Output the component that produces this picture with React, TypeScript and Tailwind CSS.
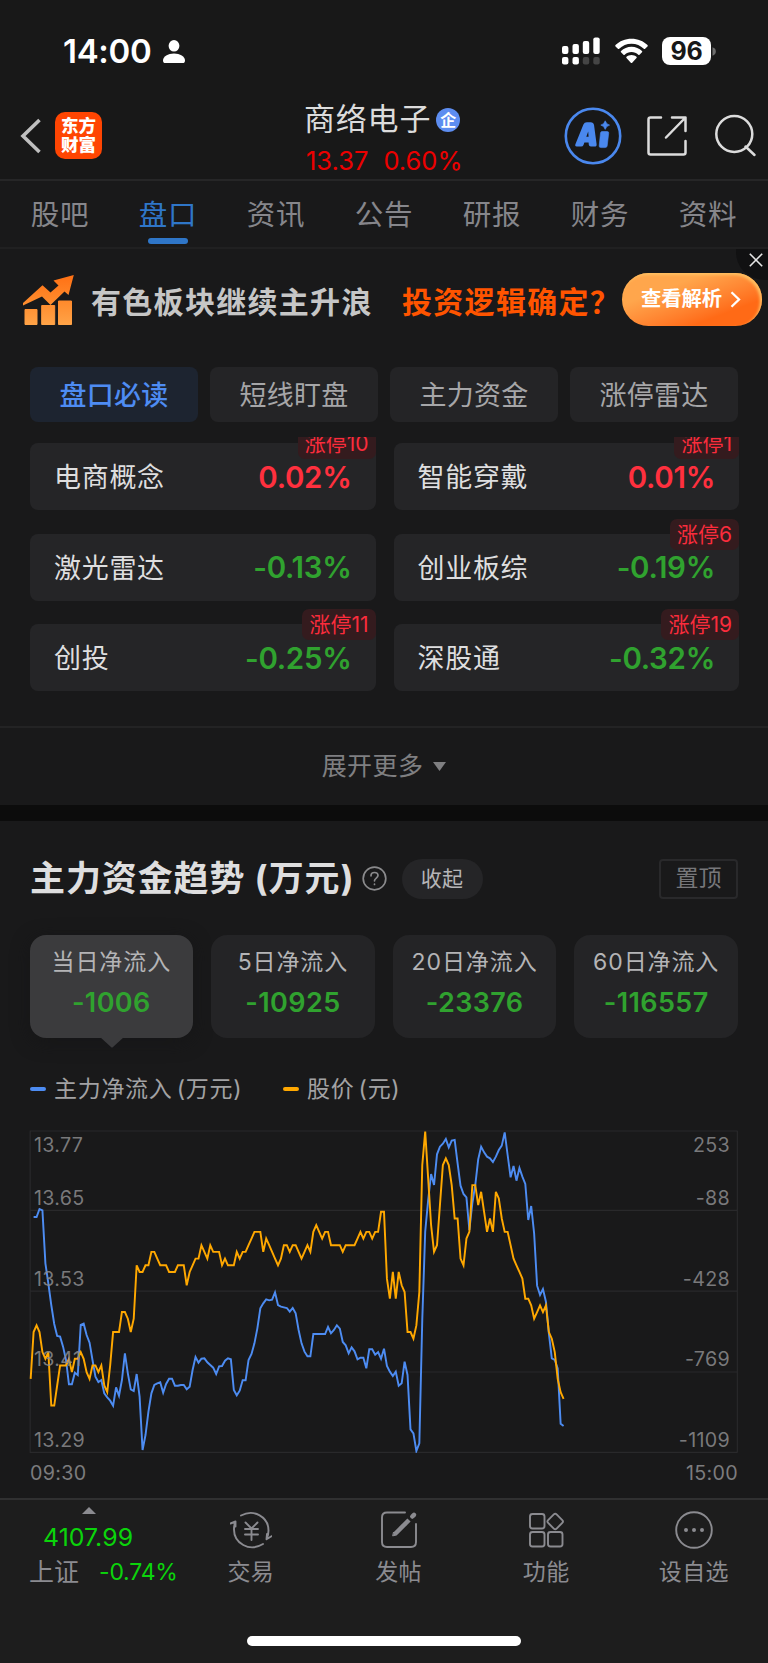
import React from 'react';
import clsx from 'clsx';

interface Sector {
  name: string;
  change: string;
  limitUp?: number;
}

interface FlowCard {
  label: string;
  value: string;
}

const tabs = ['股吧', '盘口', '资讯', '公告', '研报', '财务', '资料'];

const chips = ['盘口必读', '短线盯盘', '主力资金', '涨停雷达'];

const sectors: Sector[] = [
  { name: '电商概念', change: '0.02%', limitUp: 10 },
  { name: '智能穿戴', change: '0.01%', limitUp: 1 },
  { name: '激光雷达', change: '-0.13%' },
  { name: '创业板综', change: '-0.19%', limitUp: 6 },
  { name: '创投', change: '-0.25%', limitUp: 11 },
  { name: '深股通', change: '-0.32%', limitUp: 19 }
];

const flowCards: FlowCard[] = [
  { label: '当日净流入', value: '-1006' },
  { label: '5日净流入', value: '-10925' },
  { label: '20日净流入', value: '-23376' },
  { label: '60日净流入', value: '-116557' }
];

const priceTicks = ['13.77', '13.65', '13.53', '13.41', '13.29'];
const flowTicks = ['253', '-88', '-428', '-769', '-1109'];

// Minute prices, in cents below the day high of 13.77
const priceSeries = [
  37, 30, 29, 30, 33, 34, 33, 41, 41, 38, 35, 35, 35, 34, 36, 34, 34, 33, 34, 36,
  37, 35, 35, 36, 35, 38, 39, 35, 30, 30, 30, 27, 27, 28, 30, 28, 20, 21, 21, 20,
  20, 18, 18, 19, 20, 20, 20, 21, 21, 21, 20, 20, 20, 23, 21, 20, 19, 19, 17, 18,
  19, 17, 18, 18, 18, 20, 19, 20, 20, 20, 18, 19, 18, 18, 17, 16, 15, 15, 15, 18,
  16, 17, 18, 19, 20, 19, 17, 17, 18, 17, 17, 18, 19, 18, 17, 18, 15, 14, 15, 16,
  15, 15, 17, 17, 17, 17, 18, 17, 17, 17, 17, 16, 15, 16, 15, 15, 16, 15, 15, 12,
  12, 22, 25, 21, 25, 21, 23, 24, 30, 30, 31, 29, 24, 5, 0, 7, 14, 18, 17, 11,
  5, 4, 5, 8, 13, 13, 19, 20, 16, 15, 8, 8, 11, 9, 12, 15, 13, 15, 9, 10,
  13, 15, 15, 17, 19, 20, 21, 22, 25, 25, 26, 28, 27, 26, 27, 26, 30, 31, 33, 37,
  39, 40
];

// Minute net inflow, already scaled to the chart height, first value at 09:31
const flowSeries = [
  291, 291, 267, 271, 430, 490, 555, 612, 648, 650, 680, 720, 793, 793, 758, 765, 615, 611, 645, 668,
  720, 770, 786, 780, 820, 832, 842, 857, 802, 827, 780, 700, 760, 808, 813, 762, 830, 990, 945, 875,
  820, 795, 790, 787, 818, 792, 776, 776, 797, 797, 795, 795, 808, 800, 750, 711, 728, 716, 715, 727,
  735, 743, 762, 739, 738, 722, 715, 718, 810, 826, 812, 781, 781, 720, 702, 670, 625, 565, 550, 538,
  541, 539, 517, 555, 560, 562, 564, 575, 564, 580, 630, 670, 695, 709, 709, 642, 642, 642, 642, 642,
  621, 640, 630, 616, 626, 666, 676, 700, 682, 694, 718, 713, 713, 745, 688, 688, 704, 696, 716, 686,
  738, 755, 768, 755, 797, 790, 725, 765, 928, 940, 993, 970, 600, 335, 240, 162, 195, 103, 80, 71,
  57, 82, 62, 60, 130, 197, 222, 232, 330, 250, 195, 118, 80, 97, 110, 115, 126, 110, 90, 77,
  37, 105, 172, 138, 182, 144, 170, 192, 300, 258, 340, 497, 525, 507, 545, 640, 715, 720, 745, 911,
  918
];

const minuteX = (i: number) => (32 + i * 8.833).toFixed(1);
const pricePoints = priceSeries.map((v, i) => `${minuteX(i)},${(35 + v * 20.04).toFixed(1)}`).join(' ');
const flowPoints = flowSeries.map((v, i) => `${minuteX(i + 1)},${v}`).join(' ');

function StatusBar() {
  return (
    <div className="flex h-[90px] pt-[34px] pl-[63px] text-white">
      <span className="w-[100px] text-[33px] font-semibold leading-[35px] tracking-[-0.3px]">14:00</span>
      <svg className="mt-[6px] h-[24px] w-[22px]" viewBox="0 0 22 24" fill="currentColor">
        <ellipse cx="11" cy="5.8" rx="5.4" ry="5.8" />
        <path d="M0 20.5C0 16.5 5 13.6 11 13.6s11 2.9 11 6.9c0 1.7-.8 2.6-2.4 2.6H2.4C.8 23.1 0 22.2 0 20.5z" />
      </svg>
      <svg className="ml-[377px] mt-[3px] h-[28px] w-[38px]" viewBox="0 0 38 28" fill="currentColor">
        <rect x="0" y="9" width="6.4" height="8" rx="2" />
        <rect x="10.5" y="7" width="6.4" height="10" rx="2" />
        <rect x="20.8" y="4" width="6.4" height="13" rx="2" />
        <rect x="31.3" y="0.5" width="6.4" height="16.5" rx="2" />
        <rect x="0" y="20" width="6.4" height="7.5" rx="2" />
        <rect x="10.5" y="20" width="6.4" height="7.5" rx="2" />
        <rect x="20.8" y="20" width="6.4" height="7.5" rx="2" fill="#454545" />
        <rect x="31.3" y="20" width="6.4" height="7.5" rx="2" fill="#454545" />
      </svg>
      <svg className="ml-[15px] mt-[4px] h-[26px] w-[33px]" viewBox="0 0 33 26" fill="currentColor">
        <path d="M16.5 .8C10.2 .8 4.5 3.2 .5 7.1c-.4.4-.4.9 0 1.3l2.4 2.4c.4.4.9.4 1.3 0 3.2-3.1 7.5-5 12.3-5s9.1 1.9 12.3 5c.4.4.9.4 1.3 0l2.4-2.4c.4-.4.4-.9 0-1.3C28.5 3.2 22.8.8 16.5.8z" />
        <path d="M16.5 8.8c-4.1 0-7.8 1.6-10.5 4.2-.4.4-.4.9 0 1.3l2.5 2.4c.3.4.9.4 1.2 0 1.8-1.7 4.2-2.7 6.8-2.7s5 1 6.8 2.7c.3.4.9.4 1.2 0l2.5-2.4c.4-.4.4-.9 0-1.3-2.7-2.6-6.4-4.2-10.5-4.2z" />
        <path d="M16.5 16.9c-2 0-3.7.7-5 1.9-.4.4-.4.9 0 1.2l4.3 4.7c.4.4 1 .4 1.4 0l4.3-4.7c.4-.3.4-.8 0-1.2-1.3-1.2-3-1.9-5-1.9z" />
      </svg>
      <div className="ml-[14px] mt-[3px] flex h-[28px] w-[49px] items-center justify-center rounded-[8px] bg-white text-[25px] font-bold leading-none tracking-[-0.3px] text-[#181818]">
        96
      </div>
      <svg className="mt-[13px] h-[9px] w-[5px]" viewBox="0 0 5 9">
        <path d="M1.5 0.3C3.8 1 4.8 2.5 4.8 4.5S3.8 8 1.5 8.7z" fill="#6d6d6d" />
      </svg>
    </div>
  );
}

function Header() {
  return (
    <header className="flex h-[91px] border-b-2 border-[#262627] text-[#dcdcdc]">
      <svg className="ml-[20px] mt-[28px] h-[36px] w-[21px]" viewBox="0 0 21 36" fill="none" stroke="#bfbfbf" strokeWidth="3.6">
        <path d="M19.5 2L3 18l16.5 16" />
      </svg>
      <div className="ml-[14px] mt-[22px] flex h-[47px] w-[47px] flex-col items-center justify-center rounded-[10px] bg-[#ff4502] text-[17.5px] font-black leading-[18.5px] text-white">
        <span>东方</span>
        <span>财富</span>
      </div>
      <div className="ml-[202px] mt-[12px] w-[175px]">
        <div className="flex h-[34px] items-center">
          <span className="text-[31px] leading-[34px] tracking-[0.8px]">商络电子</span>
          <span className="ml-[5px] mt-[2px] flex h-[24px] w-[24px] items-center justify-center rounded-full bg-[#5d8df0] text-[16px] font-bold leading-none text-white">
            企
          </span>
        </div>
        <div className="ml-[2px] mt-[9px] flex gap-[15px] text-[25.5px] leading-[32px] text-[#ec0000]">
          <span>13.37</span>
          <span>0.60%</span>
        </div>
      </div>
      <svg className="ml-[85px] mt-[17px] h-[58px] w-[58px] shrink-0" viewBox="0 0 58 58">
        <circle cx="29" cy="29" r="27.2" fill="none" stroke="#4a88ee" strokeWidth="2.6" />
        <path
          d="M11.3 37.6L19.4 17.6Q20.4 15.3 22.8 15.3H27Q29.6 15.3 30 17.8L32.6 37.2Q32.9 39.6 30.6 39.6H26.8Q25 39.6 24.8 37.8L24.6 35.6H20.4L19.5 38Q18.9 39.6 17.1 39.6H12.6Q10.6 39.6 11.3 37.6ZM22.3 29.8H24.6L24.2 24.6Z"
          fill="#4a88ee"
          fillRule="evenodd"
        />
        <path
          d="M38 24.5H43.2Q44.9 24.5 44.7 26.2L43.2 38.8Q43 40.6 41.2 40.6H36.8Q35 40.6 35.2 38.8L36.5 26Q36.7 24.5 38 24.5ZM41.2 13.8Q42.2 17.2 45.6 18.1Q42.2 19 41.2 22.4Q40.2 19 36.8 18.1Q40.2 17.2 41.2 13.8Z"
          fill="#4a88ee"
          stroke="#4a88ee"
          strokeWidth="0.6"
        />
      </svg>
      <svg className="ml-[24px] mt-[25px] h-[42px] w-[42px] shrink-0" viewBox="0 0 42 42" fill="none" stroke="currentColor" strokeWidth="2.5" strokeLinecap="round" strokeLinejoin="round">
        <path d="M15 2.5H4.5Q2.5 2.5 2.5 4.5V37.5Q2.5 39.5 4.5 39.5H37.5Q39.5 39.5 39.5 37.5V26" />
        <path d="M26 2.5H39.5V16M39.5 2.5L20 22.5" />
      </svg>
      <svg className="ml-[26px] mt-[24px] h-[43px] w-[43px] shrink-0" viewBox="0 0 43 43" fill="none" stroke="currentColor" strokeWidth="2.5" strokeLinecap="round">
        <circle cx="20.3" cy="20" r="18" />
        <path d="M31.5 32.5L40.5 41" />
      </svg>
    </header>
  );
}

function TabBar() {
  return (
    <nav className="grid h-[68px] grid-cols-7 border-b-2 border-[#202021] pl-[6px] pr-[6px]">
      {tabs.map((tab, index) => (
        <div
          key={tab}
          className={clsx(
            'relative flex justify-center pt-[17px] text-[28.5px] leading-[34px] tracking-[0.8px]',
            index === 1 ? 'text-[#2f76c8]' : 'text-[#86868b]'
          )}
        >
          {tab}
          {index === 1 && (
            <span className="absolute left-[34px] top-[57px] h-[6px] w-[40px] rounded-full bg-[#2f76c8]" />
          )}
        </div>
      ))}
    </nav>
  );
}

function Banner() {
  return (
    <div className="relative flex h-[106px] items-center overflow-hidden">
      <svg className="ml-[22px] mb-[4px] h-[52px] w-[54px]" viewBox="0 0 54 52">
        <defs>
          <linearGradient id="trend" x1="0" y1="0" x2="0" y2="1">
            <stop offset="0" stopColor="#ff7014" />
            <stop offset="1" stopColor="#ff8f30" />
          </linearGradient>
          <linearGradient id="trendBars" x1="0" y1="0" x2="0" y2="1">
            <stop offset="0" stopColor="#ff8a2c" />
            <stop offset="1" stopColor="#ffa347" />
          </linearGradient>
        </defs>
        <path d="M3 35.5h12v15H3zM19.7 31.5h13v19h-13zM36.5 27h13v23.5h-13z" fill="url(#trendBars)" stroke="url(#trendBars)" strokeLinejoin="round" />
        <path d="M1 29L20.5 11.2L28.5 18.5L36.5 11.5L31.5 6.5L51.8 1L46.5 21L42.5 17.5L28.5 31L20 22.5L1 31.5Z" fill="url(#trend)" />
      </svg>
      <span className="ml-[15px] w-[311px] whitespace-nowrap text-[30px] font-bold leading-none tracking-[1.3px] text-[#c6c6c6]">有色板块继续主升浪</span>
      <span className="w-[220px] whitespace-nowrap text-[30px] font-bold leading-none tracking-[1.3px] text-[#ff5400]">投资逻辑确定？</span>
      <button className="absolute left-[622px] top-[24px] flex h-[53px] w-[140px] items-center rounded-full bg-linear-to-br from-[#ffa64c] from-30% to-[#ff6a16] to-75% pl-[19px] text-[20.3px] font-bold leading-none text-white shadow-[inset_-2px_2px_3px_#ffc062]">
        查看解析
        <svg className="ml-[8px] h-[17px] w-[11px]" viewBox="0 0 11 17" fill="none" stroke="currentColor" strokeWidth="2.3">
          <path d="M1.5 1.2L9 8.5L1.5 15.8" />
        </svg>
      </button>
      <div className="absolute right-0 top-0 h-[31px] w-[32px] rounded-bl-[28px] bg-[#111112]">
        <svg className="ml-[13px] mt-[4px] h-[14px] w-[14px]" viewBox="0 0 14 14" stroke="#e6e6e6" strokeWidth="1.6">
          <path d="M.8.8L13.2 13.2M13.2 .8L.8 13.2" />
        </svg>
      </div>
    </div>
  );
}

function SectorCard({ sector }: { sector: Sector }) {
  const falling = sector.change.startsWith('-');
  return (
    <div className="relative flex h-[67px] items-center justify-between rounded-[8px] bg-[#252527] pl-[24px] pr-[24px] pt-[2px]">
      <span className="text-[27px] leading-none tracking-[0.7px] text-[#dededf]">{sector.name}</span>
      <span
        className={clsx(
          'text-[29.5px] font-semibold leading-none tracking-[-0.3px]',
          falling ? 'text-[#30a22f]' : 'text-[#ff303e]'
        )}
      >
        {sector.change}
      </span>
      {sector.limitUp && (
        <span className="absolute right-0 top-[-15px] flex h-[31px] items-center rounded-[7px] bg-[#341b1e] px-[7px] text-[21px] leading-none text-[#fb2c3c]">
          涨停{sector.limitUp}
        </span>
      )}
    </div>
  );
}

function Sectors() {
  return (
    <section>
      <div className="mt-[12px] grid h-[55px] grid-cols-4 gap-[12px] px-[30px]">
        {chips.map((chip, index) => (
          <div
            key={chip}
            className={clsx(
              'flex items-center justify-center rounded-[8px] pt-[2px] text-[27px] leading-none tracking-[0.3px]',
              index === 0 ? 'bg-[#1d2430] font-medium text-[#4e8cf3]' : 'bg-[#242426] text-[#a6a6a8]'
            )}
          >
            {chip}
          </div>
        ))}
      </div>
      <div className="mt-[15px] h-[291px] overflow-hidden border-b-2 border-[#232324] pl-[30px] pr-[29px] pt-[6px]">
        <div className="grid grid-cols-2 gap-x-[18px] gap-y-[23.5px]">
          {sectors.map((sector) => (
            <SectorCard key={sector.name} sector={sector} />
          ))}
        </div>
      </div>
      <div className="flex h-[77px] items-center justify-center text-[25px] leading-none tracking-[0.4px] text-[#7f7f81]">
        展开更多
        <svg className="ml-[10px] h-[9px] w-[13px]" viewBox="0 0 13 9" fill="currentColor">
          <path d="M0 0H13L6.5 9Z" />
        </svg>
      </div>
    </section>
  );
}

function FlowChart() {
  return (
    <div className="relative mx-[29px] mt-[26px] h-[323px] w-[710px]">
      <svg className="absolute inset-0 h-[323px] w-[709px]" viewBox="27 30 2127 969" fill="none">
        <g stroke="#29292b" strokeWidth="3.5">
          <path d="M29 33H2153M29 271H2153M29 513.5H2153M29 756H2153M29 997H2153M30.5 33V997M2152 33V997" />
        </g>
        <polyline points={flowPoints} stroke="#4d8cf2" strokeWidth="5.8" />
        <polyline points={pricePoints} stroke="#ffa800" strokeWidth="5.8" />
      </svg>
      <div className="absolute inset-0 flex justify-between pl-[5px] pr-[9px] pt-px text-[19.7px] leading-[28px] tracking-[0.3px] text-[#8b8b8d]/85">
        {[priceTicks, flowTicks].map((ticks, side) => (
          <div key={side} className={clsx('flex flex-col', side === 1 && 'text-right')}>
            {ticks.map((tick, index) => (
              <span
                key={tick}
                className={clsx('shrink-0', index === 0 ? 'h-[53px]' : index === 4 ? 'h-[28px]' : 'h-[80.7px]')}
              >
                {tick}
              </span>
            ))}
          </div>
        ))}
      </div>
    </div>
  );
}

function CapitalFlow() {
  return (
    <section className="h-[693px] border-t-[16px] border-[#0c0c0c]">
      <div className="mt-[37px] flex h-[41px] items-center px-[30px]">
        <h2 className="whitespace-nowrap text-[35px] font-bold leading-none tracking-[0.9px] text-[#dededf]">主力资金趋势 (万元)</h2>
        <svg className="ml-[7px] h-[25px] w-[25px]" viewBox="0 0 25 25" fill="none" stroke="#8a8a8c" strokeWidth="1.7" strokeLinecap="round">
          <circle cx="12.5" cy="12.5" r="11.3" />
          <path d="M9 9.8C9 7.8 10.5 6.5 12.5 6.5S16 7.8 16 9.6C16 12 12.5 12.2 12.5 14.8M12.5 18.2V18.5" />
        </svg>
        <div className="ml-[15px] flex h-[40px] w-[81px] items-center justify-center rounded-full bg-[#252527] text-[21px] leading-none tracking-[0.4px] text-[#b5b5b7]">收起</div>
        <div className="ml-auto flex h-[40px] w-[79px] items-center justify-center rounded-[4px] border-2 border-[#29292b] text-[23px] leading-none text-[#77777a]">置顶</div>
      </div>
      <div className="mt-[36px] grid h-[103px] grid-cols-4 gap-[18px] pl-[29.5px] pr-[30px]">
        {flowCards.map((card, index) => (
          <div
            key={card.label}
            className={clsx(
              'relative flex flex-col items-center rounded-[16px] pt-[12px]',
              index === 0 ? 'bg-[#3b3b3d] shadow-[0_4px_18px_#161617]' : 'bg-[#242426]'
            )}
          >
            <span className="whitespace-nowrap text-[23px] leading-[30px] tracking-[0.9px] text-[#b4b4b6]">{card.label}</span>
            <span className="mt-[9px] text-[27px] font-semibold leading-[34px] tracking-[0.4px] text-[#30a22f]">{card.value}</span>
            {index === 0 && (
              <svg className="absolute left-[70px] top-[102px] h-[11px] w-[24px]" viewBox="0 0 24 11" fill="#3b3b3d">
                <path d="M0 0H24L13 10Q12 11 11 10Z" />
              </svg>
            )}
          </div>
        ))}
      </div>
      <div className="mt-[36px] flex h-[30px] items-center pl-[30px] text-[23px] leading-none tracking-[0.7px] [word-spacing:-3px] text-[#a2a2a4]">
        <span className="mr-[8px] h-[4px] w-[16px] rounded-[2px] bg-[#4d8cf2]" />
        <span className="w-[229px]">主力净流入 (万元)</span>
        <span className="mr-[8px] h-[4px] w-[16px] rounded-[2px] bg-[#ffa800]" />
        <span>股价 (元)</span>
      </div>
      <FlowChart />
      <div className="mt-[6px] flex justify-between pl-[30px] pr-[30px] text-[19.7px] leading-[28px] tracking-[0.3px] text-[#7c7c7e]">
        <span>09:30</span>
        <span>15:00</span>
      </div>
    </section>
  );
}

const actions = [
  {
    label: '交易',
    icon: (
      <>
        <path d="M11 5.5C24 -1.5 38.5 7 38.5 20.5C38.5 24 38 26.5 36.5 29.2M36.5 29.2L41.5 26.2M36.5 29.2L37 24M33 34C19 42.5 4 33 4 19.5C4 16.5 4.4 14 5.5 11.5M5.5 11.5L0.5 13.5M5.5 11.5V16.5" />
        <path d="M15.5 12.5L21.5 18.5L27.5 12.5M21.5 18.5V30M15 19H28M15 24.5H28" />
      </>
    )
  },
  {
    label: '发帖',
    icon: (
      <>
        <path d="M27 2.5H9Q4 2.5 4 7.5V32Q4 37 9 37H33Q38 37 38 32V14" />
        <path d="M17 24L31 10" strokeWidth="4.5" strokeLinecap="butt" />
        <path d="M15 25.8L18.5 25L15.8 22.3Z" fill="currentColor" strokeWidth="1" />
        <path d="M34.3 6.5L36 4.8" strokeWidth="4.5" />
      </>
    )
  },
  {
    label: '功能',
    icon: (
      <>
        <rect x="5" y="4" width="14.5" height="14.5" rx="2.5" />
        <rect x="5" y="22" width="14.5" height="14.5" rx="2.5" />
        <rect x="23" y="22" width="14.5" height="14.5" rx="2.5" />
        <rect x="24.2" y="5.5" width="12" height="12" rx="2" transform="rotate(45 30.2 11.5)" />
      </>
    )
  },
  {
    label: '设自选',
    icon: (
      <>
        <circle cx="21" cy="20" r="17.8" />
        <path d="M13 20V20.01M21 20V20.01M29 20V20.01" strokeWidth="4" />
      </>
    )
  }
];

function BottomBar() {
  return (
    <footer className="relative h-[166px] border-t-2 border-[#303031] bg-[#1d1d1d] text-[#8b8b90]">
      <div className="flex pl-[29px]">
        <div className="w-[148px]">
          <svg className="ml-[53px] mt-[7px] h-[7px] w-[14px]" viewBox="0 0 14 7" fill="currentColor">
            <path d="M0 7L7 0L14 7Z" />
          </svg>
          <div className="ml-[14px] mt-[8px] text-[24.8px] leading-[30px] tracking-[0.1px] text-[#0bd40b]">4107.99</div>
          <div className="mt-[5px] flex h-[30px] items-center whitespace-nowrap leading-none">
            <span className="text-[25px]">上证</span>
            <span className="ml-[20px] text-[23px] tracking-[-0.2px] text-[#0bd40b]">-0.74%</span>
          </div>
        </div>
        {actions.map((action) => (
          <div key={action.label} className="flex w-[147.7px] flex-col items-center">
            <svg className="mt-[10px] h-[40px] w-[42px]" viewBox="0 0 42 40" fill="none" stroke="currentColor" strokeWidth="1.9" strokeLinecap="round" strokeLinejoin="round">
              {action.icon}
            </svg>
            <span className="mt-[7px] text-[23px] leading-[30px] tracking-[0.4px]">{action.label}</span>
          </div>
        ))}
      </div>
      <div className="absolute left-[247px] top-[136px] h-[10px] w-[274px] rounded-full bg-white" />
    </footer>
  );
}

export default function App() {
  return (
    <div className="h-[1663px] w-[768px] overflow-hidden bg-[#19191a] font-['Inter','Noto_Sans_CJK_SC',sans-serif]">
      <div className="bg-[#181818]">
        <StatusBar />
        <Header />
      </div>
      <TabBar />
      <Banner />
      <Sectors />
      <CapitalFlow />
      <BottomBar />
    </div>
  );
}
